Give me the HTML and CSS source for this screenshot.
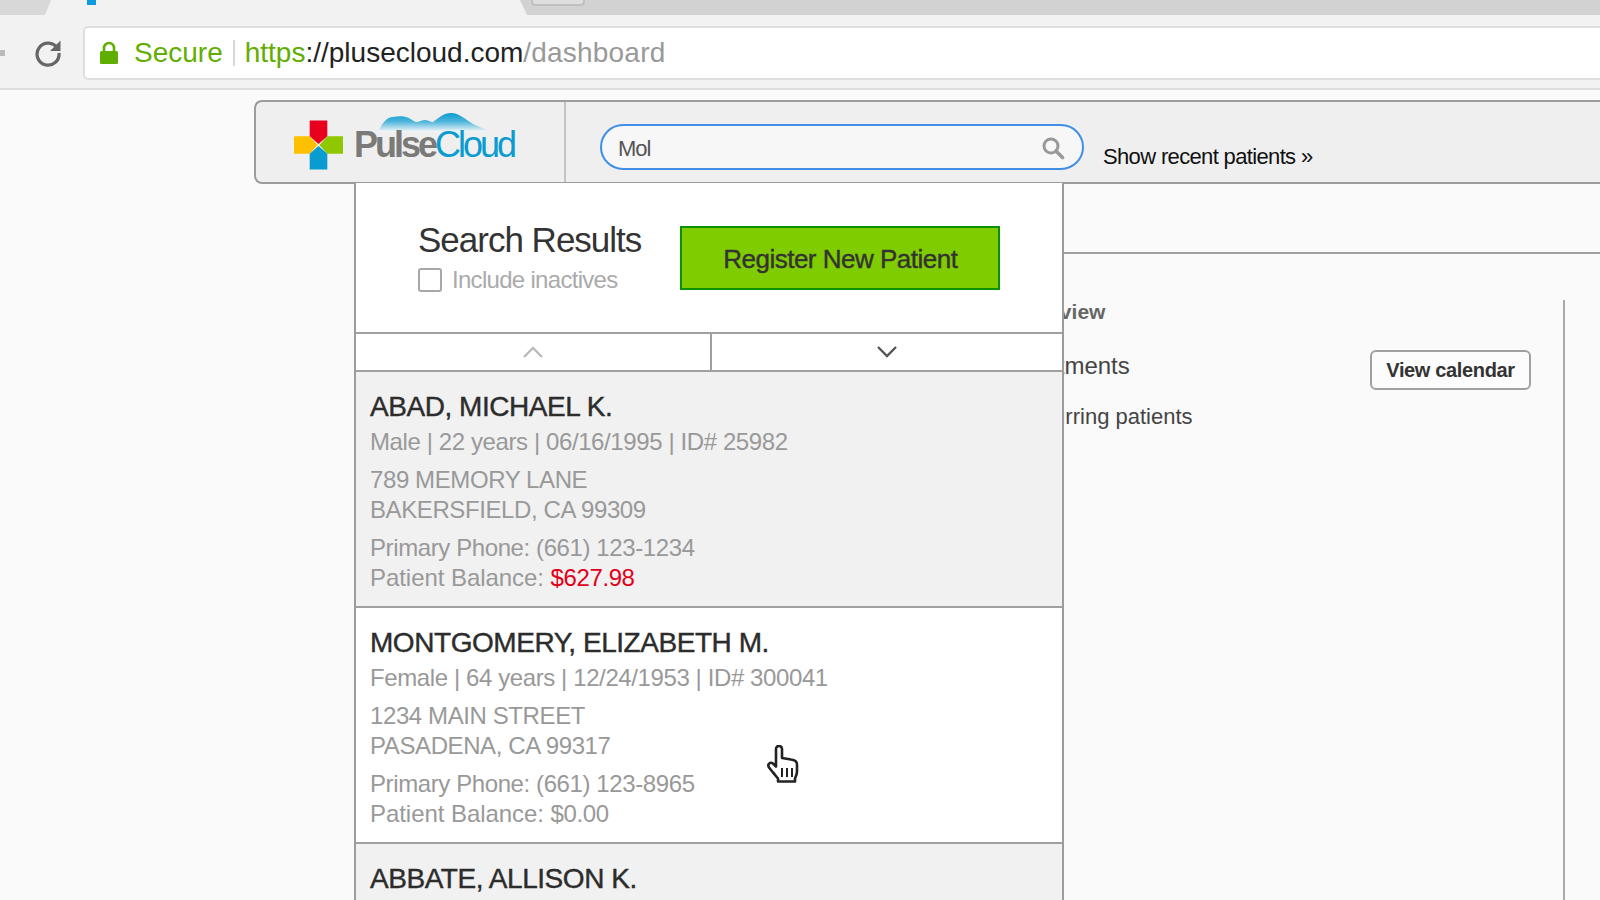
FILE: index.html
```html
<!DOCTYPE html>
<html lang="en">
<head>
  <meta charset="UTF-8">
  <meta name="viewport" content="width=device-width, initial-scale=1.0">
  <title>PulseCloud Dashboard</title>
  <link rel="stylesheet" href="styles.css">
</head>
<body>
  <div class="tabstrip">
    <div class="tab-stub"></div>
    <div class="tab-active"><span class="favicon"></span></div>
    <div class="tab-new"></div>
  </div>
  <div class="toolbar">
    <span class="back-tip"></span>
    <svg class="reload" width="30" height="30" viewBox="0 0 30 30">
      <path d="M24.500 10.500A11 11 0 1 0 26 15" fill="none" stroke="#666" stroke-width="3.200"/>
      <path d="M27.500 2.500V13H17z" fill="#666"/>
    </svg>
    <div class="urlbar">
      <svg class="lock" width="20" height="24" viewBox="0 0 20 24">
        <path d="M5 11V7a5 5 0 0 1 10 0v4" fill="none" stroke="#5fae00" stroke-width="2.600"/>
        <rect x="1" y="10" width="18" height="13" rx="1.500" fill="#5fae00"/>
      </svg>
      <span class="secure">Secure</span>
      <span class="url-sep"></span>
      <span class="url"><span class="secure">https</span>://plusecloud.com<span class="url-path">/dashboard</span></span>
    </div>
  </div>

  <div class="app">
    <header class="topbar">
      <div class="logo-cell">
        <svg class="logo-cross" width="49" height="50" viewBox="0 0 50 50">
          <path d="M16 0h18v16l-9 8-9-8z" fill="#e8001c"/>
          <path d="M50 16v18H34l-8-9 8-9z" fill="#8fc800"/>
          <path d="M0 16v18h16l8-9-8-9z" fill="#ffc000"/>
          <path d="M16 50h18V34l-9-8-9 8z" fill="#0a9bd0"/>
        </svg>
        <div class="logo-word">
          <svg class="logo-cloud" width="112" height="20" viewBox="0 0 112 20">
            <defs>
              <linearGradient id="cloudFade" x1="0" y1="0" x2="0" y2="1">
                <stop offset="0" stop-color="#0a9bd0"/>
                <stop offset="0.45" stop-color="#4db5dc"/>
                <stop offset="1" stop-color="#f8f8f8"/>
              </linearGradient>
            </defs>
            <path d="M0 19C4 10 9 4 15 4c5-1 10-1 13 0 4 1 7 4 10 5 3 0 6-2 9-2 3 0 5 2 8 2C60 5 66 0 73 0c8 0 14 6 22 11 6 3 12 5 17 8z" fill="url(#cloudFade)"/>
          </svg>
          <span class="logo-pulse">Pulse</span><span class="logo-blue">Cloud</span>
        </div>
      </div>
      <div class="search-cell">
        <div class="search-box">
          <span class="search-text">Mol</span>
          <svg class="search-icon" width="24" height="24" viewBox="0 0 24 24">
            <circle cx="10" cy="10" r="7" fill="none" stroke="#999" stroke-width="3"/>
            <path d="M15 15l6.500 6.500" stroke="#999" stroke-width="3.600" stroke-linecap="round"/>
          </svg>
        </div>
        <a class="recent-link">Show recent patients »</a>
      </div>
    </header>

    <section class="subbar"></section>

    <main class="dash">
      <div class="dash-col">
        <h2 class="dash-title">Overview</h2>
        <div class="dash-row">
          <span class="dash-item item-appts">Appointments</span>
          <button class="calendar-btn">View calendar</button>
        </div>
        <span class="dash-item item-recur">Recurring patients</span>
      </div>
    </main>

    <div class="results">
      <div class="results-head">
        <div>
          <h1 class="results-title">Search Results</h1>
          <label class="inactive-check"><span class="checkbox"></span>Include inactives</label>
        </div>
        <button class="register-btn">Register New Patient</button>
      </div>
      <div class="pager">
        <div class="pager-cell">
          <svg width="22" height="14" viewBox="0 0 22 14"><path d="M2 12l9-9 9 9" fill="none" stroke="#bbb" stroke-width="2.400"/></svg>
        </div>
        <div class="pager-cell">
          <svg width="22" height="14" viewBox="0 0 22 14"><path d="M2 2l9 9 9-9" fill="none" stroke="#555" stroke-width="2.400"/></svg>
        </div>
      </div>
      <article class="patient shaded">
        <h3 class="patient-name">ABAD, MICHAEL K.</h3>
        <p class="patient-line">Male | 22 years | 06/16/1995 | ID# 25982</p>
        <p class="patient-block">789 MEMORY LANE<br>BAKERSFIELD, CA 99309</p>
        <p class="patient-block">Primary Phone: (661) 123-1234<br><span class="balance-label">Patient Balance: </span><span class="owing">$627.98</span></p>
      </article>
      <article class="patient">
        <h3 class="patient-name">MONTGOMERY, ELIZABETH M.</h3>
        <p class="patient-line">Female | 64 years | 12/24/1953 | ID# 300041</p>
        <p class="patient-block">1234 MAIN STREET<br>PASADENA, CA 99317</p>
        <p class="patient-block">Primary Phone: (661) 123-8965<br><span class="balance-label">Patient Balance: </span>$0.00</p>
      </article>
      <article class="patient shaded">
        <h3 class="patient-name">ABBATE, ALLISON K.</h3>
      </article>
    </div>

    <svg class="hand" width="34" height="40" viewBox="0 0 34 40">
      <path d="M9 4c0-4 6-4 6 0v9l9 1.500c4 .5 6 2.500 6 5v7c0 3-1 5-2 7v3H11v-3c-2-2-3-4-5-6l-4-5c-2-3 1-6 4-4l3 3z" fill="#fff" stroke="#222" stroke-width="2.600" stroke-linejoin="round"/>
      <path d="M15 23v9M20 23v9M25 23v9" stroke="#222" stroke-width="2"/>
    </svg>
  </div>
</body>
</html>
```

FILE: styles.css
```css
* {
  box-sizing: border-box;
}

body {
  margin: 0;
  width: 1600px;
  height: 900px;
  overflow: hidden;
  background-color: #fafafa;
  font-family: "Liberation Sans", Arial, sans-serif;
  color: #333333;
}

/* Browser chrome */
.tabstrip {
  display: flex;
  height: 15px;
  background-color: #d2d2d2;
}

.tab-stub {
  width: 51px;
  background-color: #d8d8d8;
  clip-path: polygon(0 0, 100% 0, 88% 100%, 0 100%);
}

.tab-active {
  width: 482px;
  margin-left: -6px;
  padding-left: 42px;
  background-color: #f2f2f2;
  clip-path: polygon(6px 0, calc(100% - 7px) 0, 100% 100%, 0 100%);
}

.favicon {
  display: block;
  width: 9px;
  height: 5px;
  background-color: #0a9be0;
}

.tab-new {
  width: 54px;
  height: 6px;
  margin-left: 4px;
  background-color: #dedede;
  border: 2px solid #c0c0c0;
  border-top: none;
  border-radius: 0 0 4px 4px;
}

.toolbar {
  display: flex;
  align-items: center;
  height: 75px;
  padding-top: 2px;
  background-color: #f2f2f2;
  border-bottom: 2px solid #dddddd;
}

.back-tip {
  width: 5px;
  height: 6px;
  margin-right: 28px;
  background-color: #bbbbbb;
}

.reload {
  margin-right: 20px;
}

.urlbar {
  display: flex;
  align-items: center;
  flex: 1;
  height: 54px;
  padding-left: 14px;
  background-color: #ffffff;
  border: 2px solid #dedede;
  border-right: none;
  border-radius: 5px 0 0 5px;
  font-size: 28px;
}

.lock {
  margin-right: 15px;
}

.secure {
  color: #5fae00;
}

.url-sep {
  width: 2px;
  height: 26px;
  margin: 0 10px;
  background-color: #d8d8d8;
}

.url {
  color: #222222;
}

.url-path {
  letter-spacing: 0.2px;
  color: #999999;
}

/* App header */
.app {
  position: relative;
}

.topbar {
  display: flex;
  height: 84px;
  margin: 10px 0 0 254px;
  background-color: #efefef;
  border: 2px solid #9c9c9c;
  border-right: none;
  border-radius: 8px 0 0 8px;
}

.logo-cell {
  display: flex;
  align-items: center;
  width: 310px;
  padding-left: 38px;
  border-right: 2px solid #c4c4c4;
}

.logo-cross {
  margin-top: 6px;
}

.logo-word {
  position: relative;
  margin: 6px 0 0 11px;
  font-size: 36px;
  letter-spacing: -3px;
}

.logo-cloud {
  position: absolute;
  left: 24px;
  top: -11px;
}

.logo-pulse {
  position: relative;
  font-weight: bold;
  color: #7a7a78;
}

.logo-blue {
  position: relative;
  color: #0a9bd0;
}

.search-cell {
  display: flex;
  flex: 1;
  padding: 22px 0 0 34px;
}

.search-box {
  display: flex;
  align-items: center;
  justify-content: space-between;
  width: 484px;
  height: 46px;
  padding: 0 17px 0 16px;
  background-color: #f7f7f7;
  border: 2px solid #3f8fe6;
  border-radius: 24px;
}

.search-text {
  padding-top: 3px;
  font-size: 22px;
  letter-spacing: -1px;
  color: #555555;
}

.search-icon {
  margin-top: 1px;
}

.recent-link {
  margin: 20px 0 0 19px;
  font-size: 22px;
  letter-spacing: -0.65px;
  color: #111111;
}

/* Dashboard behind the results */
.subbar {
  height: 70px;
  margin-left: 1063px;
  border-bottom: 2px solid #a0a0a0;
}

.dash {
  display: flex;
  justify-content: flex-end;
  padding: 46px 35px 0 0;
}

.dash-col {
  width: 553px;
  height: 600px;
  border-right: 2px solid #aaaaaa;
}

.dash-title {
  margin: 0;
  font-size: 21px;
  color: #666666;
}

.dash-row {
  display: flex;
  justify-content: flex-end;
  align-items: flex-start;
  padding: 26px 32px 0 0;
}

.dash-item {
  display: block;
  color: #444444;
}

.item-appts {
  margin: 2px auto 0 -29px;
  font-size: 24px;
}

.item-recur {
  margin: 14px 0 0 2px;
  font-size: 22px;
}

.calendar-btn {
  width: 161px;
  height: 40px;
  padding: 0;
  background-color: #fcfcfc;
  border: 2px solid #a0a0a0;
  border-radius: 6px;
  font: bold 20px "Liberation Sans", Arial, sans-serif;
  letter-spacing: -0.35px;
  color: #333333;
}

/* Search results dropdown */
.results {
  position: absolute;
  left: 354px;
  top: 83px;
  width: 710px;
  height: 717px;
  overflow: hidden;
  background-color: #ffffff;
  border: solid #9c9c9c;
  border-width: 0 2px;
}

.results-head {
  display: flex;
  align-items: flex-start;
  height: 149px;
  padding: 37px 0 0 62px;
}

.results-title {
  margin: 0;
  font-size: 35px;
  font-weight: normal;
  letter-spacing: -1px;
  line-height: 40px;
}

.inactive-check {
  display: flex;
  align-items: center;
  margin-top: 6px;
  font-size: 24px;
  letter-spacing: -0.7px;
  color: #aaaaaa;
}

.checkbox {
  width: 24px;
  height: 24px;
  margin-right: 10px;
  background-color: #ffffff;
  border: 2px solid #a8a8a8;
  border-radius: 3px;
}

.register-btn {
  width: 320px;
  height: 64px;
  margin: 6px 0 0 39px;
  padding: 2px 0 0;
  background-color: #7fcc00;
  border: 2px solid #0a9000;
  font: 26px "Liberation Sans", Arial, sans-serif;
  letter-spacing: -0.5px;
  color: #333333;
  -webkit-text-stroke: 0.4px #333333;
}

.pager {
  display: flex;
  height: 40px;
  border-top: 2px solid #a0a0a0;
  border-bottom: 2px solid #a0a0a0;
}

.pager-cell {
  display: flex;
  align-items: center;
  justify-content: center;
  flex: 1;
}

.pager-cell:first-child {
  flex: 0 0 356px;
  border-right: 2px solid #a0a0a0;
}

.patient {
  height: 236px;
  padding: 18px 14px 0;
  border-bottom: 2px solid #a0a0a0;
}

.shaded {
  background-color: #f1f1f1;
}

.patient-name {
  margin: 0;
  font-size: 28px;
  font-weight: normal;
  line-height: 34px;
  letter-spacing: -0.45px;
  color: #2c2c2c;
  -webkit-text-stroke: 0.4px #2c2c2c;
}

.patient-line,
.patient-block {
  margin: 0;
  font-size: 24px;
  line-height: 30px;
  letter-spacing: -0.4px;
  color: #999999;
}

.patient-line {
  margin-top: 3px;
}

.patient-block {
  margin-top: 8px;
}

.balance-label {
  letter-spacing: -0.05px;
}

.owing {
  color: #e2001a;
}

.hand {
  position: absolute;
  left: 767px;
  top: 645px;
}
```
